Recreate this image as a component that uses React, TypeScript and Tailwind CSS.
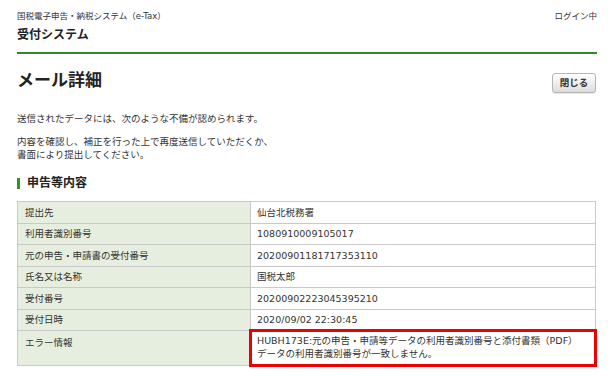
const rows: { label: string; value: string }[] = [
  { label: '提出先', value: '仙台北税務署' },
  { label: '利用者識別番号', value: '1080910009105017' },
  { label: '元の申告・申請書の受付番号', value: '20200901181717353110' },
  { label: '氏名又は名称', value: '国税太郎' },
  { label: '受付番号', value: '20200902223045395210' },
  { label: '受付日時', value: '2020/09/02 22:30:45' },
];

export default function App() {
  return (
    <div
      className="h-[376px] w-[613px] overflow-hidden bg-white pl-[17px] pr-[16px] text-[#333]"
      style={{ fontFamily: '"DejaVu Sans", "Noto Sans CJK JP", sans-serif' }}
    >
      {/* header */}
      <div className="flex justify-between pt-[10px] text-[8.5px] leading-[12px]">
        <span>国税電子申告・納税システム（e-Tax）</span>
        <span>ログイン中</span>
      </div>
      <div className="mt-[5px] text-[12px] font-bold leading-[16px] text-[#222]">受付システム</div>
      <div className="mt-[9px] h-[2px] bg-[#2b8a2b]" />

      {/* title */}
      <div className="mt-[14px] flex items-start justify-between">
        <h1 className="text-[17px] font-bold leading-[24px] text-[#222]">メール詳細</h1>
        <button className="mr-px mt-[5px] h-[20px] w-[44px] rounded-[3px] border border-[#b5b5b5] bg-gradient-to-b from-white to-[#dcdcdc] text-[9.5px] font-bold leading-none text-[#333] shadow-[0_1px_1px_rgba(0,0,0,0.1)]">
          閉じる
        </button>
      </div>

      {/* message */}
      <div className="mt-[19px] text-[9.5px] leading-[13px]">
        <p>送信されたデータには、次のような不備が認められます。</p>
        <p className="mt-[10px]">
          内容を確認し、補正を行った上で再度送信していただくか、
          <br />
          書面により提出してください。
        </p>
      </div>

      {/* section */}
      <div className="mt-[14px] flex items-center gap-[7px]">
        <span className="h-[11px] w-[3px] bg-[#2f962f]" />
        <h2 className="text-[12px] font-bold leading-[16px] text-[#222]">申告等内容</h2>
      </div>

      <table className="mt-[10px] w-[580px] border-collapse text-[9.5px] leading-[13px]">
        <tbody>
          {rows.map((r) => (
            <tr key={r.label}>
              <td className="h-[21.5px] w-[233px] border border-[#c9c9c9] bg-[#e6efdf] px-[7px] align-middle">
                {r.label}
              </td>
              <td className="h-[21.5px] border border-[#c9c9c9] px-[6px] align-middle">{r.value}</td>
            </tr>
          ))}
          <tr>
            <td className="h-[35px] border border-[#c9c9c9] bg-[#e6efdf] px-[7px] pt-[5px] align-top">
              エラー情報
            </td>
            <td className="h-[35px] border-[3px] border-[#ee0000] px-[5px] pt-[2px] align-top">
              HUBH173E:元の申告・申請等データの利用者識別番号と添付書類（PDF）
              <br />
              データの利用者識別番号が一致しません。
            </td>
          </tr>
        </tbody>
      </table>
    </div>
  );
}
